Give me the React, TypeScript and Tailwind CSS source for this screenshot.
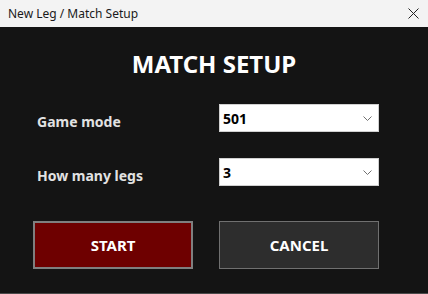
import React from "react";

const font = { fontFamily: '"Noto Sans", "Open Sans", sans-serif' };

const Chevron = () => (
  <svg width="9" height="5" viewBox="0 0 9 5" className="text-[#707070]">
    <path d="M0.5 0.5 L4.5 4.5 L8.5 0.5" fill="none" stroke="currentColor" strokeWidth="1" />
  </svg>
);

const Row = ({ label, value, className }: { label: string; value: string; className?: string }) => {
  return (
    <div className={"flex items-center pl-[33px] " + (className || "")}>
      <div className="w-[186px] pl-[4px] pt-[6px] text-[14px] font-bold text-[#e2e2e2]">{label}</div>
      <div className="flex h-[28px] w-[160px] items-center justify-between border border-[#d0d0d0] bg-white pl-[3px] pr-[6px]">
        <span className="text-[14px] font-bold text-black">{value}</span>
        <Chevron />
      </div>
    </div>
  );
};

export default function App() {
  return (
    <div className="h-[294px] w-[428px] overflow-hidden bg-[#141414]" style={font}>
      <div className="flex h-[27px] items-center justify-between bg-[#f3f3f3] pl-[8px] pr-[8px]">
        <span className="text-[12px] text-[#1a1a1a]">New Leg / Match Setup</span>
        <svg width="11" height="11" viewBox="0 0 11 11" className="mr-[1px]">
          <path d="M0.5 0.5 L10.5 10.5 M10.5 0.5 L0.5 10.5" stroke="#222" strokeWidth="1" />
        </svg>
      </div>
      <div className="flex h-[267px] flex-col border-b border-[#4a4a4a]">
        <h1 className="mt-[21px] text-center text-[24px] leading-[32px] font-bold text-white">MATCH SETUP</h1>
        <Row label="Game mode" value="501" className="mt-[24px]" />
        <Row label="How many legs" value="3" className="mt-[26px]" />
        <div className="mt-[35px] flex gap-[26px] pl-[33px]">
          <button className="flex h-[48px] w-[160px] items-center justify-center border-2 border-[#7f7f7f] bg-[#6e0000] text-[15px] font-bold text-white">
            START
          </button>
          <button className="flex h-[48px] w-[160px] items-center justify-center border border-[#707070] bg-[#2d2d2d] text-[15px] font-bold text-white">
            CANCEL
          </button>
        </div>
      </div>
    </div>
  );
}
